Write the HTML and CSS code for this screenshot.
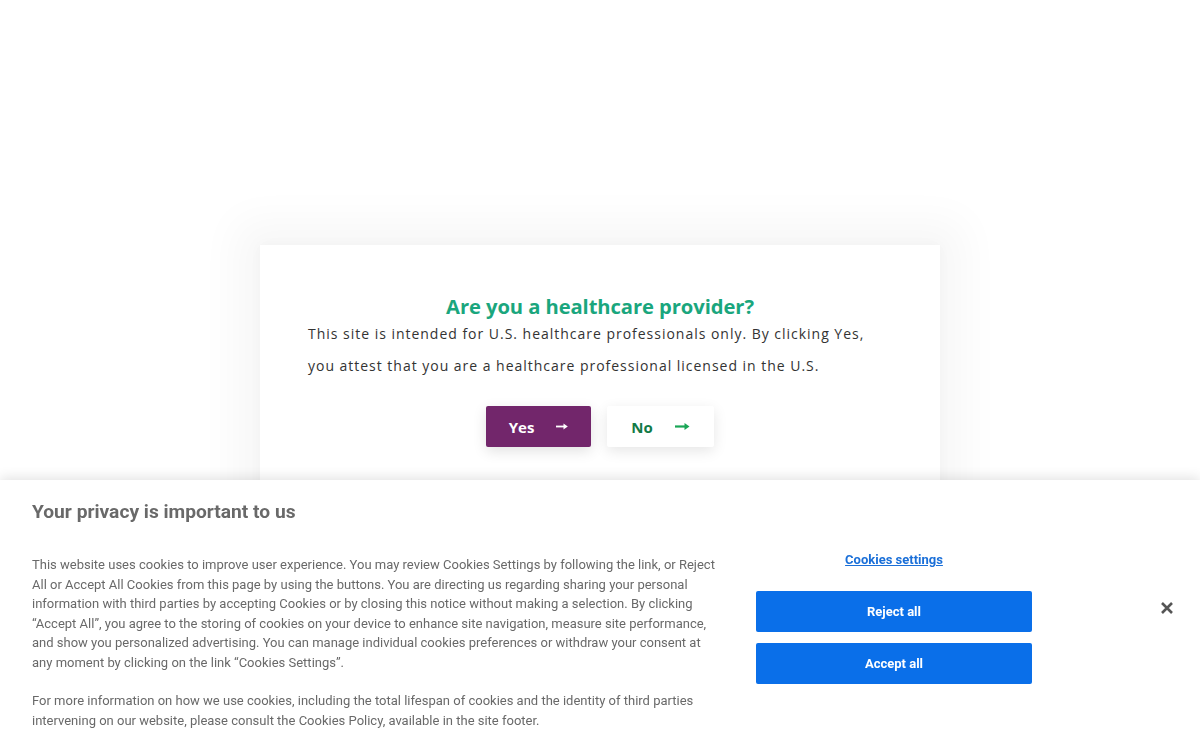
FILE: index.html
```html
<!DOCTYPE html>
<html lang="en">
<head>
<meta charset="utf-8">
<title>Healthcare provider</title>
<link rel="stylesheet" href="styles.css">
</head>
<body>
<div class="stage">
  <div class="modal">
    <h2 class="modal-title">Are you a healthcare provider?</h2>
    <p class="modal-text">This site is intended for U.S. healthcare professionals only. By clicking Yes, you attest that you are a healthcare professional licensed in the U.S.</p>
    <div class="modal-actions">
      <button class="btn btn-yes">Yes <svg class="arrow" width="12" height="7" viewBox="0 0 12 7"><path d="M0 3.5H8" stroke="currentColor" stroke-width="1.8"/><path d="M7.5 0.6L11.8 3.5L7.5 6.4Z" fill="currentColor"/></svg></button>
      <button class="btn btn-no">No <svg class="arrow" width="15" height="9" viewBox="0 0 15 9"><path d="M0 4.5H10" stroke="currentColor" stroke-width="2.2"/><path d="M9.5 1L14.5 4.5L9.5 8Z" fill="currentColor"/></svg></button>
    </div>
  </div>
</div>
<div class="cookie">
  <div class="cookie-main">
    <h3 class="cookie-title">Your privacy is important to us</h3>
    <p class="cookie-text">This website uses cookies to improve user experience. You may review Cookies Settings by following the link, or Reject All or Accept All Cookies from this page by using the buttons. You are directing us regarding sharing your personal information with third parties by accepting Cookies or by closing this notice without making a selection. By clicking “Accept All”, you agree to the storing of cookies on your device to enhance site navigation, measure site performance, and show you personalized advertising. You can manage individual cookies preferences or withdraw your consent at any moment by clicking on the link “Cookies Settings”.</p>
    <p class="cookie-text">For more information on how we use cookies, including the total lifespan of cookies and the identity of third parties intervening on our website, please consult the Cookies Policy, available in the site footer.</p>
  </div>
  <div class="cookie-actions">
    <a class="cookie-link" href="#">Cookies settings</a>
    <button class="cbtn">Reject all</button>
    <button class="cbtn">Accept all</button>
  </div>
  <button class="cookie-close" aria-label="Close">
    <svg width="14" height="14" viewBox="0 0 14 14"><path d="M2 2L12 12M12 2L2 12" stroke="#555" stroke-width="2.6" stroke-linecap="butt"/></svg>
  </button>
</div>
</body>
</html>
```

FILE: styles.css
```css
html, body {
  margin: 0;
  padding: 0;
  background: #fff;
  height: 740px;
  overflow: hidden;
}
body {
  font-family: "Open Sans", sans-serif;
}
.stage {
  display: flex;
  justify-content: center;
  padding-top: 245px;
}
.modal {
  width: 680px;
  height: 300px;
  box-sizing: border-box;
  background: #fff;
  padding: 46px 48px 0;
  box-shadow: 0 0 40px 24px rgba(0,0,0,0.035), 0 0 12px rgba(0,0,0,0.03);
}
.modal-title {
  margin: 0;
  text-align: center;
  font-size: 20.2px;
  font-weight: 700;
  color: #1aa67d;
  line-height: 30px;
  letter-spacing: -0.08px;
}
.modal-text {
  margin: -3px 0 0;
  font-size: 14px;
  line-height: 32px;
  letter-spacing: 0.98px;
  color: #333;
}
.modal-actions {
  display: flex;
  justify-content: center;
  gap: 16px;
  margin-top: 24px;
}
.btn {
  height: 41px;
  border: none;
  border-radius: 2px;
  font-family: "Open Sans", sans-serif;
  font-size: 15px;
  font-weight: 700;
  display: flex;
  align-items: center;
  justify-content: center;
  gap: 22px;
  cursor: pointer;
}
.btn .arrow { display: block; }
.btn-yes {
  width: 105px;
  background: #72266b;
  color: #fff;
  box-shadow: 0 4px 14px rgba(0,0,0,0.12);
}
.btn-no {
  width: 107px;
  background: #fff;
  color: #137a46;
  box-shadow: 0 4px 14px rgba(0,0,0,0.1);
}
.btn-no .arrow { color: #1aa656; }

.cookie {
  position: fixed;
  left: 0;
  right: 0;
  bottom: 0;
  top: 480px;
  background: #fff;
  box-shadow: 0 -2px 12px rgba(0,0,0,0.12);
  display: flex;
  font-family: Roboto, "Liberation Sans", sans-serif;
  color: #696969;
}
.cookie-main {
  width: 690px;
  padding: 19px 0 0 32px;
}
.cookie-title {
  margin: 0;
  font-size: 19.2px;
  font-weight: 700;
  line-height: 26px;
  color: #696969;
}
.cookie-text {
  margin: 0;
  font-size: 13px;
  line-height: 19.5px;
}
.cookie-title + .cookie-text { margin-top: 30px; }
.cookie-text + .cookie-text { margin-top: 19px; }
.cookie-actions {
  margin-left: 34px;
  width: 276px;
  padding-top: 71px;
  display: flex;
  flex-direction: column;
  align-items: stretch;
}
.cookie-link {
  align-self: center;
  font-size: 13px;
  font-weight: 700;
  color: #1a6fd8;
  text-decoration: underline;
  line-height: 18px;
  margin-bottom: 22px;
}
.cbtn {
  height: 41px;
  border: none;
  border-radius: 2px;
  background: #0a6fe9;
  color: #fff;
  font-family: Roboto, "Liberation Sans", sans-serif;
  font-size: 13px;
  font-weight: 700;
  margin-bottom: 11px;
  cursor: pointer;
}
.cookie-close {
  margin: 121px 0 0 128px;
  width: 14px;
  height: 14px;
  padding: 0;
  border: none;
  background: none;
  display: flex;
  cursor: pointer;
}
```
